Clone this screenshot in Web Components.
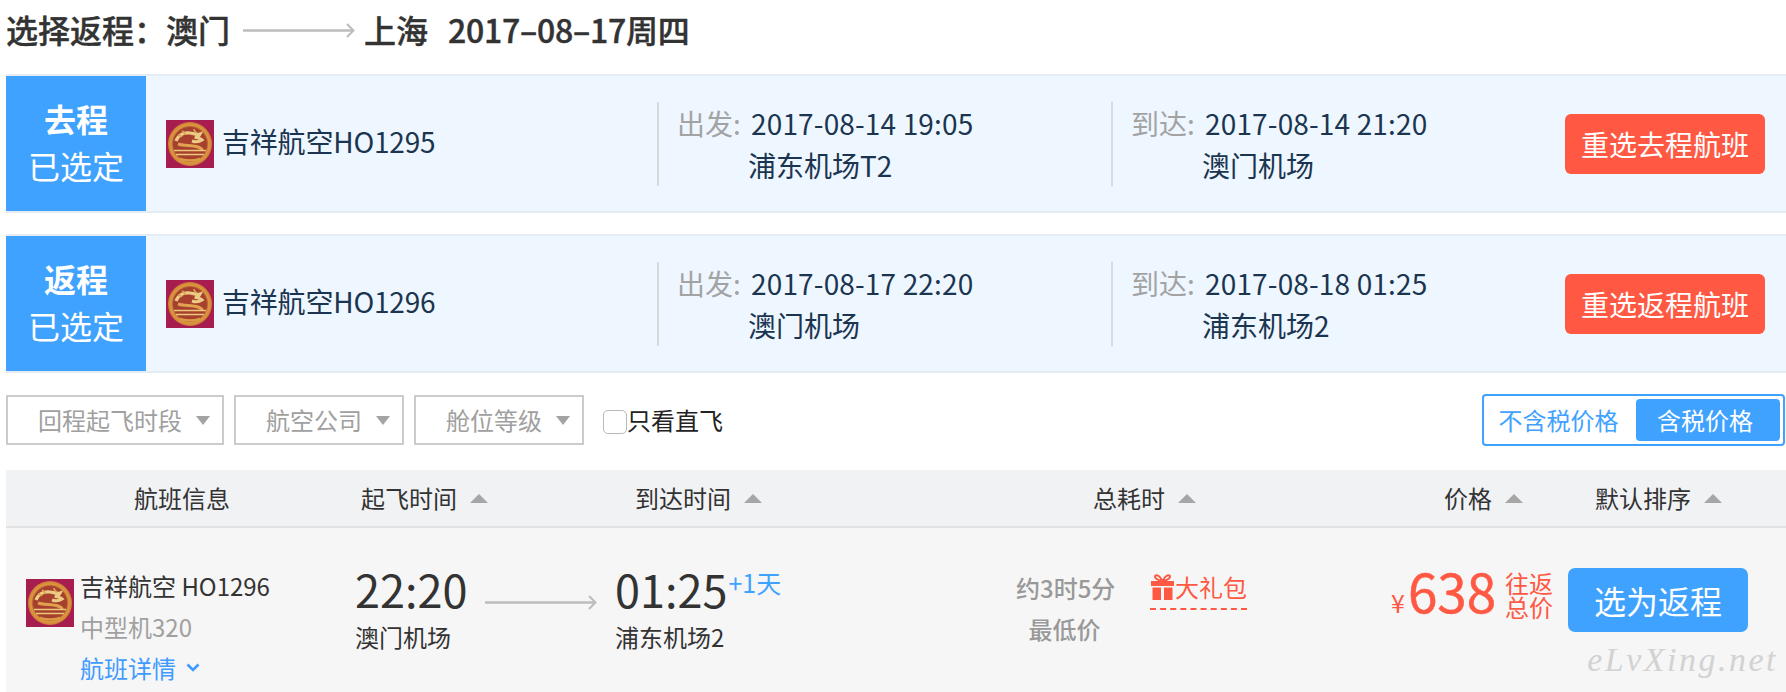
<!DOCTYPE html>
<html lang="zh-CN">
<head>
<meta charset="utf-8">
<title>选择返程</title>
<style>
html, body { margin: 0; background: #fff; }
body { width: 1786px; height: 692px; overflow: hidden; font-family: "Noto Sans CJK SC", "Noto Sans", sans-serif; color: #333; }
</style>
</head>
<body>
<trip-title from="澳门" to="上海" date="2017–08–17周四"></trip-title>
<selected-leg leg="去程" flight="吉祥航空HO1295" dep-time="2017-08-14 19:05" dep-port="浦东机场T2" arr-time="2017-08-14 21:20" arr-port="澳门机场" action="重选去程航班"></selected-leg>
<selected-leg style="margin-top:21px" leg="返程" flight="吉祥航空HO1296" dep-time="2017-08-17 22:20" dep-port="澳门机场" arr-time="2017-08-18 01:25" arr-port="浦东机场2" action="重选返程航班"></selected-leg>
<filter-bar>
  <filter-select label="回程起飞时段" style="width:218px"></filter-select>
  <filter-select label="航空公司"></filter-select>
  <filter-select label="舱位等级"></filter-select>
</filter-bar>
<sort-header></sort-header>
<result-row></result-row>

<script>
const FONT = `"Noto Sans CJK SC", "Noto Sans", sans-serif`;

// logo of the airline, same drawing everywhere
const logoTpl = document.createElement("template");
logoTpl.innerHTML = `
<style>
:host { display: block; width: 48px; height: 48px; flex: none; }
svg { display: block; width: 100%; height: 100%; }
</style>
<svg viewBox="0 0 48 48" preserveAspectRatio="none">
  <defs>
    <radialGradient id="g" cx="50%" cy="50%" r="52%">
      <stop offset="0" stop-color="#a8402f"/>
      <stop offset=".72" stop-color="#a5402e"/>
      <stop offset=".82" stop-color="#dd9a40"/>
      <stop offset="1" stop-color="#c9742f"/>
    </radialGradient>
  </defs>
  <rect width="48" height="48" fill="#a81d4f"/>
  <circle cx="24" cy="24" r="22" fill="url(#g)"/>
  <path d="M10 21c2-6 8-9 14-8 4 .6 7 2 10 1-1 2-3 3-5 3 2 1 5 1 7 3-3 2-7 2-10 1" fill="none" stroke="#eccb85" stroke-width="3.200"/>
  <path d="M12 24c6 2 14 1 20 3 3 1 4 2 4 3" fill="none" stroke="#e0a24f" stroke-width="3"/>
  <path d="M16 11c2 1 3 2 3 4M28 9c0 2 1 3 3 4M12 15c2 0 3 1 4 2" fill="none" stroke="#dfa24e" stroke-width="1.600"/>
  <path d="M8 30.500h32M10 34.500h28" stroke="#ecc878" stroke-width="1.700"/>
  <path d="M14 38.500c4 2.500 16 2.500 20 0" fill="none" stroke="#dc9a45" stroke-width="2.200"/>
</svg>`;
class AirlineLogo extends HTMLElement {
  constructor() {
    super();
    this.attachShadow({ mode: "open" });
    this.shadowRoot.appendChild(logoTpl.content.cloneNode(true));
  }
}
customElements.define("airline-logo", AirlineLogo);

const arrowTpl = document.createElement("template");
arrowTpl.innerHTML = `
<style>
:host { display: block; width: 112px; height: 16px; flex: none; }
svg { display: block; }
</style>
<svg width="112" height="16" viewBox="0 0 112 16">
  <path d="M0 8.500h110" stroke="#bdbdbd" stroke-width="2.400" fill="none"/>
  <path d="M104 2l6.500 6.500L104 15" stroke="#bdbdbd" stroke-width="2" fill="none"/>
</svg>`;
class FlightArrow extends HTMLElement {
  constructor() {
    super();
    this.attachShadow({ mode: "open" });
    this.shadowRoot.appendChild(arrowTpl.content.cloneNode(true));
  }
}
customElements.define("flight-arrow", FlightArrow);

class TripTitle extends HTMLElement {
  constructor() {
    super();
    this.attachShadow({ mode: "open" });
    this.shadowRoot.innerHTML = `
    <style>
    :host { display: flex; align-items: center; box-sizing: border-box; height: 74px; padding: 0 0 16px 6px; font: 500 32px/1 ${FONT}; color: #333; -webkit-text-stroke: .4px #333; }
    flight-arrow { margin: 2px 9px 0 13px; }
    .date { margin-left: 20px; letter-spacing: -.25px; }
    </style>
    <span>选择返程：</span><span>${this.getAttribute("from")}</span>
    <flight-arrow></flight-arrow>
    <span>${this.getAttribute("to")}</span>
    <span class="date">${this.getAttribute("date")}</span>`;
  }
}
customElements.define("trip-title", TripTitle);

class SelectedLeg extends HTMLElement {
  constructor() {
    super();
    const a = n => this.getAttribute(n);
    this.attachShadow({ mode: "open" });
    this.shadowRoot.innerHTML = `
    <style>
    :host { display: flex; align-items: center; box-sizing: border-box; height: 139px; margin-left: 6px; background: #eef7ff; border-top: 2px solid #e6ecf4; border-bottom: 2px solid #e6ecf4; color: #1b3550; font: 28px/42px ${FONT}; }
    .tag { align-self: stretch; width: 140px; flex: none; box-sizing: border-box; padding-bottom: 4px; background: #3fa2ff; color: #fff; display: flex; flex-direction: column; align-items: center; justify-content: center; font-size: 32px; line-height: 47px; }
    .tag b { font-weight: 700; }
    .air { display: flex; align-items: center; width: 511px; flex: none; box-sizing: border-box; padding-left: 20px; }
    .air span { margin: -6px 0 0 8px; letter-spacing: -.2px; }
    .stop { display: grid; grid-template-columns: 74px auto; align-content: center; box-sizing: border-box; width: 454px; height: 84px; flex: none; border-left: 2px solid #d8dbde; padding-left: 18px; }
    .stop .lab { color: #a3a3a3; }
    .stop .time { letter-spacing: .15px; }
    .stop .port { grid-column: 2; margin-left: -3px; }
    button { all: unset; box-sizing: border-box; width: 200px; height: 60px; background: #ff5843; color: #fff; border-radius: 6px; text-align: center; font: 28px/60px ${FONT}; }
    </style>
    <div class="tag"><b>${a("leg")}</b><span>已选定</span></div>
    <div class="air"><airline-logo></airline-logo><span>${a("flight")}</span></div>
    <div class="stop"><span class="lab">出发:</span><span class="time">${a("dep-time")}</span><span class="port">${a("dep-port")}</span></div>
    <div class="stop"><span class="lab">到达:</span><span class="time">${a("arr-time")}</span><span class="port">${a("arr-port")}</span></div>
    <button>${a("action")}</button>`;
  }
}
customElements.define("selected-leg", SelectedLeg);

class FilterSelect extends HTMLElement {
  constructor() {
    super();
    this.attachShadow({ mode: "open" });
    this.shadowRoot.innerHTML = `
    <style>
    :host { display: flex; align-items: center; justify-content: flex-end; box-sizing: border-box; width: 170px; height: 50px; border: 2px solid #ccc; padding-right: 12px; color: #a0a0a0; font: 24px/1 ${FONT}; white-space: nowrap; }
    i { width: 0; height: 0; margin-left: 14px; border: 7px solid transparent; border-top: 9px solid #a3a3a3; border-bottom: 0; }
    </style>
    <span>${this.getAttribute("label")}</span><i></i>`;
  }
}
customElements.define("filter-select", FilterSelect);

class TaxToggle extends HTMLElement {
  constructor() {
    super();
    this.attachShadow({ mode: "open" });
    this.shadowRoot.innerHTML = `
    <style>
    :host { display: flex; align-items: stretch; box-sizing: border-box; width: 303px; height: 52px; padding: 3px 3px 3px 1px; border: 2px solid #3fa2ff; border-radius: 4px; color: #3fa2ff; font: 24px/1 ${FONT}; }
    span { display: flex; align-items: center; justify-content: center; }
    .off { width: 147px; }
    .on { flex: 1; margin-left: 4px; box-sizing: border-box; padding-right: 6px; background: #3fa2ff; color: #fff; border-radius: 4px; }
    </style>
    <span class="off">不含税价格</span><span class="on">含税价格</span>`;
  }
}
customElements.define("tax-toggle", TaxToggle);

const filterTpl = document.createElement("template");
filterTpl.innerHTML = `
<style>
:host { display: flex; align-items: center; box-sizing: border-box; height: 52px; margin: 21px 1px 0 6px; gap: 10px; }
::slotted(filter-select) { flex: none; }
label { display: flex; align-items: center; margin-left: 9px; color: #222; font: 24px/1 ${FONT}; }
input { appearance: none; box-sizing: border-box; width: 24px; height: 24px; margin: 3px 0 0; background: #fff; border: 1px solid #b9b9b9; border-radius: 5px; }
tax-toggle { margin-left: auto; }
</style>
<slot></slot>
<label><input type="checkbox">只看直飞</label>
<tax-toggle></tax-toggle>`;
class FilterBar extends HTMLElement {
  constructor() {
    super();
    this.attachShadow({ mode: "open" });
    this.shadowRoot.appendChild(filterTpl.content.cloneNode(true));
  }
}
customElements.define("filter-bar", FilterBar);

class SortHeader extends HTMLElement {
  constructor() {
    super();
    const cols = [["航班信息", 128, 355, false], ["起飞时间", 0, 274, true], ["到达时间", 0, 458, true], ["总耗时", 0, 351, true], ["价格", 0, 151, true], ["默认排序", 0, 191, true]];
    const cells = cols.map(c => `<div style="padding-left:${c[1]}px;width:${c[2]}px"><span>${c[0]}</span>${c[3] ? "<i></i>" : ""}</div>`).join("");
    this.attachShadow({ mode: "open" });
    this.shadowRoot.innerHTML = `
    <style>
    :host { display: flex; align-items: center; box-sizing: border-box; height: 58px; margin: 24px 0 0 6px; background: #f1f2f4; border-bottom: 2px solid #e2e2e2; color: #333; font: 24px/1 ${FONT}; }
    div { display: flex; align-items: center; box-sizing: border-box; flex: none; }
    i { width: 0; height: 0; margin-left: 13px; border: 9px solid transparent; border-bottom: 9px solid #a6a6a6; border-top: 0; }
    </style>
    ${cells}`;
  }
}
customElements.define("sort-header", SortHeader);

class ResultRow extends HTMLElement {
  constructor() {
    super();
    this.attachShadow({ mode: "open" });
    this.shadowRoot.innerHTML = `
    <style>
    :host { display: grid; grid-template-columns: 349px 260px 401px 134px 241px 177px 218px; position: relative; height: 164px; margin-left: 6px; background: #f6f6f6; color: #333; font: 24px/1 ${FONT}; }
    .info { display: flex; padding: 51px 0 0 20px; align-items: flex-start; }
    .info airline-logo { margin: 0 6px 0 0; }
    .info div { margin-top: -14px; line-height: 41px; white-space: nowrap; }
    .model { color: #a0a0a0; display: block; }
    .more { color: #3f9bff; display: flex; align-items: center; }
    .more svg { margin-left: 10px; }
    .time { padding-top: 35px; }
    .clock { font-size: 45px; line-height: 52px; color: #333; white-space: nowrap; }
    .leg { display: flex; align-items: flex-start; }
    flight-arrow { margin: 31px 0 0 18px; }
    .port { display: block; line-height: 44px; }
    .plus { color: #3fa2ff; font-size: 25px; line-height: 24px; margin: 7px 0 0 1px; }
    .dur { justify-self: start; width: 97px; padding-top: 39px; text-align: center; color: #999; line-height: 41px; font-weight: 500; white-space: nowrap; }
    .gift { padding-top: 42px; color: #ff5843; }
    .gift div { display: inline-flex; align-items: center; height: 38px; border-bottom: 2px dashed #ff5843; }
    .gift svg { margin: -5px 0 0; }
    .gift span { margin-top: -4px; }
    .price { display: flex; align-items: flex-start; color: #ff5843; padding-top: 25px; }
    .yen { font-size: 25px; margin: 37px 3px 0 0; }
    .num { font-size: 53px; line-height: 74px; width: 97px; -webkit-text-stroke: .5px #ff5843; }
    .note { width: 50px; line-height: 24px; margin: 18px 0 0 0; }
    .act { padding-top: 40px; }
    button { all: unset; display: block; box-sizing: border-box; width: 180px; height: 64px; background: #3fa2ff; color: #fff; border-radius: 7px; text-align: center; font: 32px/64px ${FONT}; }
    .mark { position: absolute; right: 8px; top: 115px; font: italic 34px/1 "Liberation Serif", serif; color: #d2d2d2; letter-spacing: 2.500px; }
    </style>
    <div class="info">
      <airline-logo></airline-logo>
      <div>吉祥航空 HO1296<span class="model">中型机320</span>
        <span class="more">航班详情<svg width="14" height="9" viewBox="0 0 14 9"><path d="M1.500 1.500L7 7l5.500-5.500" fill="none" stroke="#3f9bff" stroke-width="2.600"/></svg></span>
      </div>
    </div>
    <div class="time"><div class="leg"><span class="clock">22:20</span><flight-arrow></flight-arrow></div><span class="port">澳门机场</span></div>
    <div class="time"><div class="leg"><span class="clock">01:25</span><span class="plus">+1天</span></div><span class="port">浦东机场2</span></div>
    <div class="dur">约3时5分<br>最低价</div>
    <div class="gift"><div>
      <svg width="25" height="26" viewBox="0 0 25 26" fill="#ff5843"><path d="M1 7h23v5H1zM2.500 13.500h8.500V26H2.500zM14 13.500h8.500V26H14zM11 7h3v5h-3z"/><path d="M12.500 7C10 2 7 .5 5.500 1.500 4 3 6 6 12.500 7zm0 0C15 2 18 .5 19.500 1.500 21 3 19 6 12.500 7z" fill="none" stroke="#ff5843" stroke-width="2"/></svg>
      <span>大礼包</span></div></div>
    <div class="price"><span class="yen">¥</span><span class="num">638</span><span class="note">往返<br>总价</span></div>
    <div class="act"><button>选为返程</button></div>
    <span class="mark">eLvXing.net</span>`;
  }
}
customElements.define("result-row", ResultRow);
</script>
</body>
</html>
